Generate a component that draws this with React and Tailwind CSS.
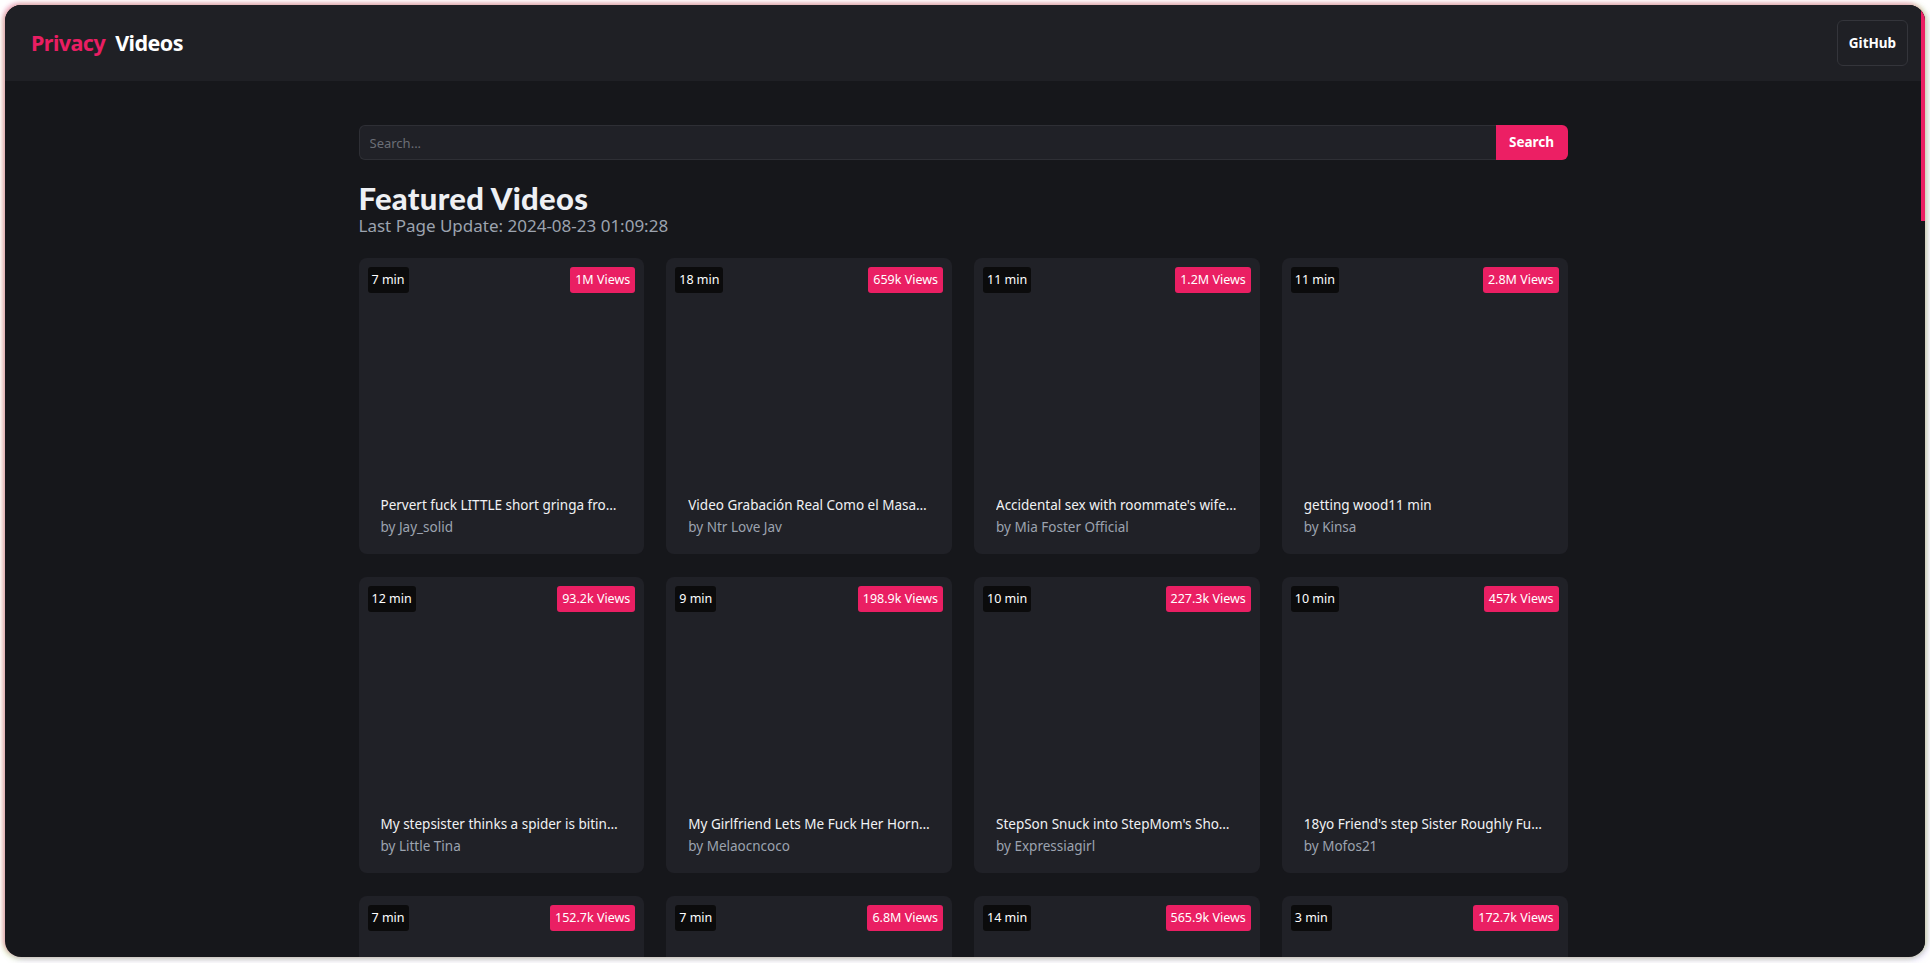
import React from "react";

const videos = [
  { d: "7 min", v: "1M Views", t: "Pervert fuck LITTLE short gringa from Colombia", a: "Jay_solid" },
  { d: "18 min", v: "659k Views", t: "Video Grabación Real Como el Masajista", a: "Ntr Love Jav" },
  { d: "11 min", v: "1.2M Views", t: "Accidental sex with roommate's wife in the kitchen", a: "Mia Foster Official" },
  { d: "11 min", v: "2.8M Views", t: "getting wood11 min", a: "Kinsa" },
  { d: "12 min", v: "93.2k Views", t: "My stepsister thinks a spider is biting her", a: "Little Tina" },
  { d: "9 min", v: "198.9k Views", t: "My Girlfriend Lets Me Fuck Her Horny Friend", a: "Melaocncoco" },
  { d: "10 min", v: "227.3k Views", t: "StepSon Snuck into StepMom's Shower", a: "Expressiagirl" },
  { d: "10 min", v: "457k Views", t: "18yo Friend's step Sister Roughly Fucked", a: "Mofos21" },
  { d: "7 min", v: "152.7k Views", t: "Untitled video", a: "Unknown" },
  { d: "7 min", v: "6.8M Views", t: "Untitled video", a: "Unknown" },
  { d: "14 min", v: "565.9k Views", t: "Untitled video", a: "Unknown" },
  { d: "3 min", v: "172.7k Views", t: "Untitled video", a: "Unknown" },
];

function Card({ d, v, t, a }) {
  return (
    <div className="flex h-[296px] flex-col rounded-lg bg-[#202127]">
      <div className="flex items-start justify-between p-[9px]">
        <span className="flex h-[26px] items-center rounded-[3px] bg-[#0b0b0c] px-[4px] text-[12.5px] text-white">
          {d}
        </span>
        <span className="flex h-[26px] items-center rounded-[3px] bg-[#ea1f63] px-[5px] text-[12.5px] text-white">
          {v}
        </span>
      </div>
      <div className="flex-1" />
      <div className="px-[22px] pb-[17px]">
        <div className="truncate text-[13.5px] leading-[20px] text-[#f1f2f4]">{t}</div>
        <div className="mt-[2px] truncate text-[13.5px] leading-[20px] text-[#9ca3af]">by {a}</div>
      </div>
    </div>
  );
}

export default function App() {
  return (
    <div
      className="h-screen w-full bg-white p-[5px]"
      style={{ fontFamily: '"Noto Sans", "Open Sans", Arial, sans-serif' }}
    >
      <div className="flex h-[952px] w-[1920px] overflow-hidden rounded-2xl bg-[#16171b] shadow-[-2px_-2px_5px_rgba(236,72,153,0.45),2px_-1px_5px_rgba(190,242,100,0.45),2px_2px_6px_rgba(167,139,250,0.5),-2px_2px_5px_rgba(190,242,100,0.45)]">
        <div className="flex min-w-0 flex-1 flex-col">
          <header className="flex h-[76px] shrink-0 items-center justify-between bg-[#1f2025] pl-[26px] pr-[13px]">
            <div className="flex items-center gap-[10px] text-[21.5px] font-bold tracking-tight">
              <span className="text-[#e91e63]">Privacy</span>
              <span className="text-white">Videos</span>
            </div>
            <button className="flex h-[46px] w-[71px] items-center justify-center rounded-md border border-[#34353b] bg-[#1f2025] text-[13.5px] font-bold text-white">
              GitHub
            </button>
          </header>
          <main className="flex-1 overflow-hidden">
            <div className="mx-auto w-[1209px] pt-[44px]">
              <div className="flex h-[35px]">
                <input
                  className="h-full flex-1 rounded-l-md border border-r-0 border-[#2e2f35] bg-[#202127] px-[10px] text-[13px] text-white outline-none placeholder:text-[#6b6e76]"
                  placeholder="Search..."
                />
                <button className="h-full w-[72px] rounded-r-md bg-[#ec1f64] text-[13.5px] font-bold text-white">
                  Search
                </button>
              </div>
              <h1
                className="mt-[21px] text-[31px] font-black leading-[34px] tracking-[0.3px] text-[#eef0f4]"
                style={{ fontFamily: 'Lato, "Noto Sans", sans-serif' }}
              >
                Featured Videos
              </h1>
              <p className="text-[17px] leading-[22px] text-[#9ca3af]">
                Last Page Update: 2024-08-23 01:09:28
              </p>
              <div className="mt-[21px] grid grid-cols-4 gap-x-[22px] gap-y-[23px]">
                {videos.map((x, i) => (
                  <Card key={i} {...x} />
                ))}
              </div>
            </div>
          </main>
        </div>
        <div className="flex w-[4px] shrink-0 flex-col bg-[#16171b]">
          <div className="h-[216px] bg-[#ec1f64]" />
        </div>
      </div>
    </div>
  );
}
